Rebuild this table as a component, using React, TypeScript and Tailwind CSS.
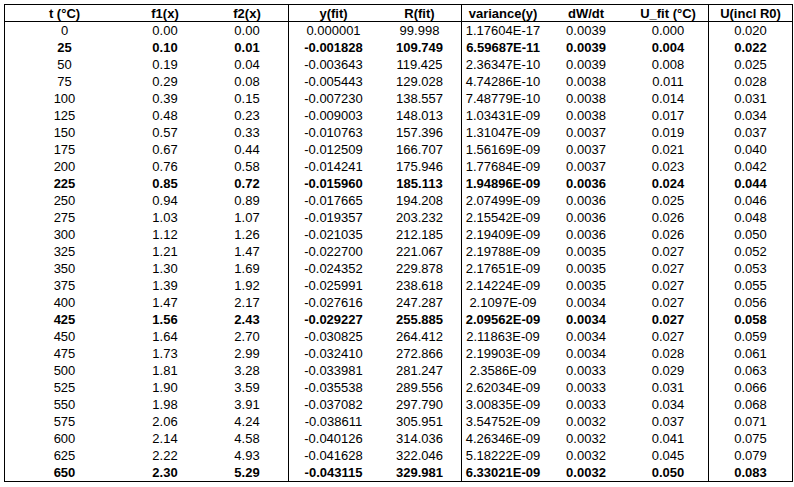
const headers = ["t (°C)", "f1(x)", "f2(x)", "y(fit)", "R(fit)", "variance(y)", "dW/dt", "U_fit (°C)", "U(incl R0)"];

const rows: string[][] = [
    ["0", "0.00", "0.00", "0.000001", "99.998", "1.17604E-17", "0.0039", "0.000", "0.020"],
    ["25", "0.10", "0.01", "-0.001828", "109.749", "6.59687E-11", "0.0039", "0.004", "0.022"],
    ["50", "0.19", "0.04", "-0.003643", "119.425", "2.36347E-10", "0.0039", "0.008", "0.025"],
    ["75", "0.29", "0.08", "-0.005443", "129.028", "4.74286E-10", "0.0038", "0.011", "0.028"],
    ["100", "0.39", "0.15", "-0.007230", "138.557", "7.48779E-10", "0.0038", "0.014", "0.031"],
    ["125", "0.48", "0.23", "-0.009003", "148.013", "1.03431E-09", "0.0038", "0.017", "0.034"],
    ["150", "0.57", "0.33", "-0.010763", "157.396", "1.31047E-09", "0.0037", "0.019", "0.037"],
    ["175", "0.67", "0.44", "-0.012509", "166.707", "1.56169E-09", "0.0037", "0.021", "0.040"],
    ["200", "0.76", "0.58", "-0.014241", "175.946", "1.77684E-09", "0.0037", "0.023", "0.042"],
    ["225", "0.85", "0.72", "-0.015960", "185.113", "1.94896E-09", "0.0036", "0.024", "0.044"],
    ["250", "0.94", "0.89", "-0.017665", "194.208", "2.07499E-09", "0.0036", "0.025", "0.046"],
    ["275", "1.03", "1.07", "-0.019357", "203.232", "2.15542E-09", "0.0036", "0.026", "0.048"],
    ["300", "1.12", "1.26", "-0.021035", "212.185", "2.19409E-09", "0.0036", "0.026", "0.050"],
    ["325", "1.21", "1.47", "-0.022700", "221.067", "2.19788E-09", "0.0035", "0.027", "0.052"],
    ["350", "1.30", "1.69", "-0.024352", "229.878", "2.17651E-09", "0.0035", "0.027", "0.053"],
    ["375", "1.39", "1.92", "-0.025991", "238.618", "2.14224E-09", "0.0035", "0.027", "0.055"],
    ["400", "1.47", "2.17", "-0.027616", "247.287", "2.1097E-09", "0.0034", "0.027", "0.056"],
    ["425", "1.56", "2.43", "-0.029227", "255.885", "2.09562E-09", "0.0034", "0.027", "0.058"],
    ["450", "1.64", "2.70", "-0.030825", "264.412", "2.11863E-09", "0.0034", "0.027", "0.059"],
    ["475", "1.73", "2.99", "-0.032410", "272.866", "2.19903E-09", "0.0034", "0.028", "0.061"],
    ["500", "1.81", "3.28", "-0.033981", "281.247", "2.3586E-09", "0.0033", "0.029", "0.063"],
    ["525", "1.90", "3.59", "-0.035538", "289.556", "2.62034E-09", "0.0033", "0.031", "0.066"],
    ["550", "1.98", "3.91", "-0.037082", "297.790", "3.00835E-09", "0.0033", "0.034", "0.068"],
    ["575", "2.06", "4.24", "-0.038611", "305.951", "3.54752E-09", "0.0032", "0.037", "0.071"],
    ["600", "2.14", "4.58", "-0.040126", "314.036", "4.26346E-09", "0.0032", "0.041", "0.075"],
    ["625", "2.22", "4.93", "-0.041628", "322.046", "5.18222E-09", "0.0032", "0.045", "0.079"],
    ["650", "2.30", "5.29", "-0.043115", "329.981", "6.33021E-09", "0.0032", "0.050", "0.083"],
];

const boldRows = ["25", "225", "425", "650"];

// columns after which a vertical rule is drawn
const ruled = [2, 4, 7];

const gridCols = "grid grid-cols-[119px_82px_83px_89px_84px_82px_84px_81px_83px]";

function Cell({ text, col, bold }: { text: string; col: number; bold?: boolean }) {
    return (
        <div
            className={
                "h-[17px] flex items-center justify-center leading-none whitespace-nowrap " +
                (bold ? "font-bold " : "") +
                (ruled.includes(col) ? "border-r border-black" : "")
            }
        >
            {text}
        </div>
    );
}

export default function App() {
    return (
        <div className="w-[794px] h-[487px] bg-white pt-[4px] pl-[4px]">
            <div
                className="w-[789px] border border-black text-black text-[13px]"
                style={{ fontFamily: '"Liberation Sans", Arial, sans-serif' }}
            >
                {/* Header */}
                <div className={gridCols + " border-b border-black"}>
                    {headers.map((h, i) => (
                        <div
                            key={h}
                            className={
                                "h-[16px] flex items-center justify-center font-bold leading-none whitespace-nowrap " +
                                (ruled.includes(i) ? "border-r border-black" : "")
                            }
                        >
                            {h}
                        </div>
                    ))}
                </div>

                {/* Body */}
                {rows.map((r) => (
                    <div key={r[0]} className={gridCols}>
                        {r.map((v, i) => (
                            <Cell key={i} text={v} col={i} bold={boldRows.includes(r[0])} />
                        ))}
                    </div>
                ))}
            </div>
        </div>
    );
}
